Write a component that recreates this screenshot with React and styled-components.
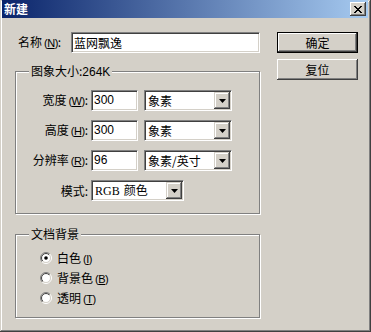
import React from 'react';
import styled, { createGlobalStyle } from 'styled-components';

const Global = createGlobalStyle`
  html, body { margin: 0; padding: 0; background: #D4D0C8; }
  body {
    font-family: "Noto Sans CJK SC", "Liberation Sans", sans-serif;
    font-size: 12px;
    color: #000;
  }
`;

const Window = styled.div`
  width: 371px;
  height: 332px;
  box-sizing: border-box;
  background: #D4D0C8;
  padding: 0 3px 3px 2px;
  box-shadow: inset -1px -1px #404040, inset 1px 1px #D4D0C8,
    inset -2px -2px #808080, inset 2px 2px #ffffff;
  display: flex;
  flex-direction: column;
`;

const TitleBar = styled.div`
  height: 18px;
  background: linear-gradient(to right, #0A246A, #A6CAF0);
  display: flex;
  align-items: center;
  justify-content: space-between;
  padding: 0 2px 0 2px;
`;

const Title = styled.span`
  color: #fff;
  font-weight: 700;
  font-size: 12px;
  line-height: 14px;
`;

const CaptionButton = styled.div`
  width: 16px;
  height: 14px;
  box-sizing: border-box;
  background: #D4D0C8;
  box-shadow: inset -1px -1px #404040, inset 1px 1px #ffffff,
    inset -2px -2px #808080, inset 2px 2px #D4D0C8;
  display: flex;
  align-items: center;
  justify-content: center;
`;

const Body = styled.div`
  display: flex;
  padding: 14px 0 0 13px;
`;

const LeftCol = styled.div`
  width: 245px;
  display: flex;
  flex-direction: column;
`;

const RightCol = styled.div`
  margin-left: 17px;
  width: 81px;
  display: flex;
  flex-direction: column;
  gap: 6px;
`;

const NameRow = styled.div`
  display: flex;
  align-items: center;
  padding-left: 3px;
  height: 21px;
`;

const NameLabel = styled.span`
  width: 53px;
  line-height: 14px;
  white-space: nowrap;
`;

const Hot = styled.span`
  font-family: "Liberation Sans", sans-serif;
  font-size: 11px;
  letter-spacing: -0.5px;
  margin-left: 2px;
  u { text-decoration: underline; }
`;

const Field = styled.div`
  box-sizing: border-box;
  height: 21px;
  width: ${p => p.$w ? `${p.$w}px` : 'auto'};
  flex: ${p => p.$w ? '0 0 auto' : '1'};
  margin-left: ${p => p.$ml || 0}px;
  background: #fff;
  border: 1px solid;
  border-color: #808080 #ffffff #ffffff #808080;
  box-shadow: inset 1px 1px #404040, inset -1px -1px #D4D0C8;
  display: flex;
  align-items: center;
  padding: 0 0 0 2px;
  font-size: 12px;
  line-height: 14px;
  white-space: nowrap;
  overflow: hidden;
`;

const Num = styled.span`
  font-family: "Liberation Sans", sans-serif;
  font-size: 12px;
  padding-bottom: ${p => p.$inline ? 0 : 2}px;
`;

const SelText = styled.span`
  flex: 1;
  padding-left: 1px;
`;

const Serif = styled.span`
  font-family: "Liberation Serif", serif;
  font-size: 12px;
  margin-right: 4px;
`;

const DropButton = styled.div`
  width: 16px;
  height: 17px;
  margin-right: 1px;
  box-sizing: border-box;
  background: #D4D0C8;
  box-shadow: inset -1px -1px #404040, inset 1px 1px #D4D0C8,
    inset -2px -2px #808080, inset 2px 2px #ffffff;
  display: flex;
  align-items: center;
  justify-content: center;
`;

const Group = styled.fieldset`
  margin: ${p => p.$mt || 0}px 0 0 0;
  padding: ${p => p.$pt}px 0 ${p => p.$pb}px 0;
  border: 1px solid #808080;
  box-shadow: inset 1px 1px #ffffff, 1px 1px #ffffff;
  min-width: 0;
`;

const Legend = styled.legend`
  margin-left: 13px;
  padding: 0 2px;
  line-height: 14px;
  background: #D4D0C8;
  position: relative;
  z-index: 1;
`;

const Rows = styled.div`
  display: flex;
  flex-direction: column;
  gap: 9px;
`;

const Row = styled.div`
  display: flex;
  align-items: center;
`;

const RowLabel = styled.span`
  width: 72px;
  margin-right: 3px;
  text-align: right;
  line-height: 14px;
  white-space: nowrap;
`;

const Radios = styled.div`
  display: flex;
  flex-direction: column;
  padding-left: 24px;
`;

const RadioRow = styled.div`
  height: 20px;
  display: flex;
  align-items: center;
  gap: 5px;
  line-height: 14px;
`;

const Button = styled.div`
  height: 21px;
  box-sizing: border-box;
  background: #D4D0C8;
  border: ${p => p.$default ? '1px solid #000' : 'none'};
  box-shadow: inset -1px -1px #404040, inset 1px 1px #ffffff,
    inset -2px -2px #808080, inset 2px 2px #D4D0C8;
  display: flex;
  align-items: center;
  justify-content: center;
  line-height: 14px;
`;

const Arrow = () => (
  <svg width="7" height="4" viewBox="0 0 7 4">
    <path d="M0 0H7L3.5 4Z" fill="#000" />
  </svg>
);

const CloseX = () => (
  <svg width="8" height="7" viewBox="0 0 8 7" shapeRendering="crispEdges">
    <path
      d="M0 0h2v1h-2zM6 0h2v1h-2zM1 1h2v1h-2zM5 1h2v1h-2zM2 2h4v1h-4zM3 3h2v1h-2zM2 4h4v1h-4zM1 5h2v1h-2zM5 5h2v1h-2zM0 6h2v1h-2zM6 6h2v1h-2z"
      fill="#000"
    />
  </svg>
);

const Radio = ({ checked, id }) => (
  <svg width="12" height="12" viewBox="0 0 12 12">
    <defs>
      <linearGradient id={`o${id}`} x1="0" y1="0" x2="1" y2="1">
        <stop offset="0.5" stopColor="#808080" />
        <stop offset="0.5" stopColor="#ffffff" />
      </linearGradient>
      <linearGradient id={`i${id}`} x1="0" y1="0" x2="1" y2="1">
        <stop offset="0.5" stopColor="#404040" />
        <stop offset="0.5" stopColor="#D4D0C8" />
      </linearGradient>
    </defs>
    <circle cx="6" cy="6" r="5.5" fill="none" stroke={`url(#o${id})`} strokeWidth="1" />
    <circle cx="6" cy="6" r="4.5" fill="#fff" stroke={`url(#i${id})`} strokeWidth="1" />
    {checked && <circle cx="6" cy="6" r="1.8" fill="#000" />}
  </svg>
);

const Select = ({ w, ml, children }) => (
  <Field $w={w} $ml={ml}>
    <SelText>{children}</SelText>
    <DropButton><Arrow /></DropButton>
  </Field>
);

const L = ({ text, k, colon = true }) => (
  <>
    {text}
    {k && <Hot>(<u>{k}</u>)</Hot>}
    {colon && ':'}
  </>
);

export default function App() {
  return (
    <>
      <Global />
      <Window>
        <TitleBar>
          <Title>新建</Title>
          <CaptionButton><CloseX /></CaptionButton>
        </TitleBar>
        <Body>
          <LeftCol>
            <NameRow>
              <NameLabel><L text="名称" k="N" /></NameLabel>
              <Field>蓝网飘逸</Field>
            </NameRow>
            <Group $mt={11} $pt={11} $pb={12}>
              <Legend>图象大小:<Num $inline>264K</Num></Legend>
              <Rows>
                <Row>
                  <RowLabel><L text="宽度" k="W" /></RowLabel>
                  <Field $w={47}><Num>300</Num></Field>
                  <Select w={88} ml={6}>象素</Select>
                </Row>
                <Row>
                  <RowLabel><L text="高度" k="H" /></RowLabel>
                  <Field $w={47}><Num>300</Num></Field>
                  <Select w={88} ml={6}>象素</Select>
                </Row>
                <Row>
                  <RowLabel><L text="分辨率" k="R" /></RowLabel>
                  <Field $w={47}><Num>96</Num></Field>
                  <Select w={88} ml={6}>象素/英寸</Select>
                </Row>
                <Row>
                  <RowLabel><L text="模式" /></RowLabel>
                  <Select w={93}><Serif>RGB</Serif>颜色</Select>
                </Row>
              </Rows>
            </Group>
            <Group $mt={13} $pt={7} $pb={9}>
              <Legend>文档背景</Legend>
              <Radios>
                <RadioRow><Radio id="a" checked /><span><L text="白色" k="I" colon={false} /></span></RadioRow>
                <RadioRow><Radio id="b" /><span><L text="背景色" k="B" colon={false} /></span></RadioRow>
                <RadioRow><Radio id="c" /><span><L text="透明" k="T" colon={false} /></span></RadioRow>
              </Radios>
            </Group>
          </LeftCol>
          <RightCol>
            <Button $default>确定</Button>
            <Button>复位</Button>
          </RightCol>
        </Body>
      </Window>
    </>
  );
}
